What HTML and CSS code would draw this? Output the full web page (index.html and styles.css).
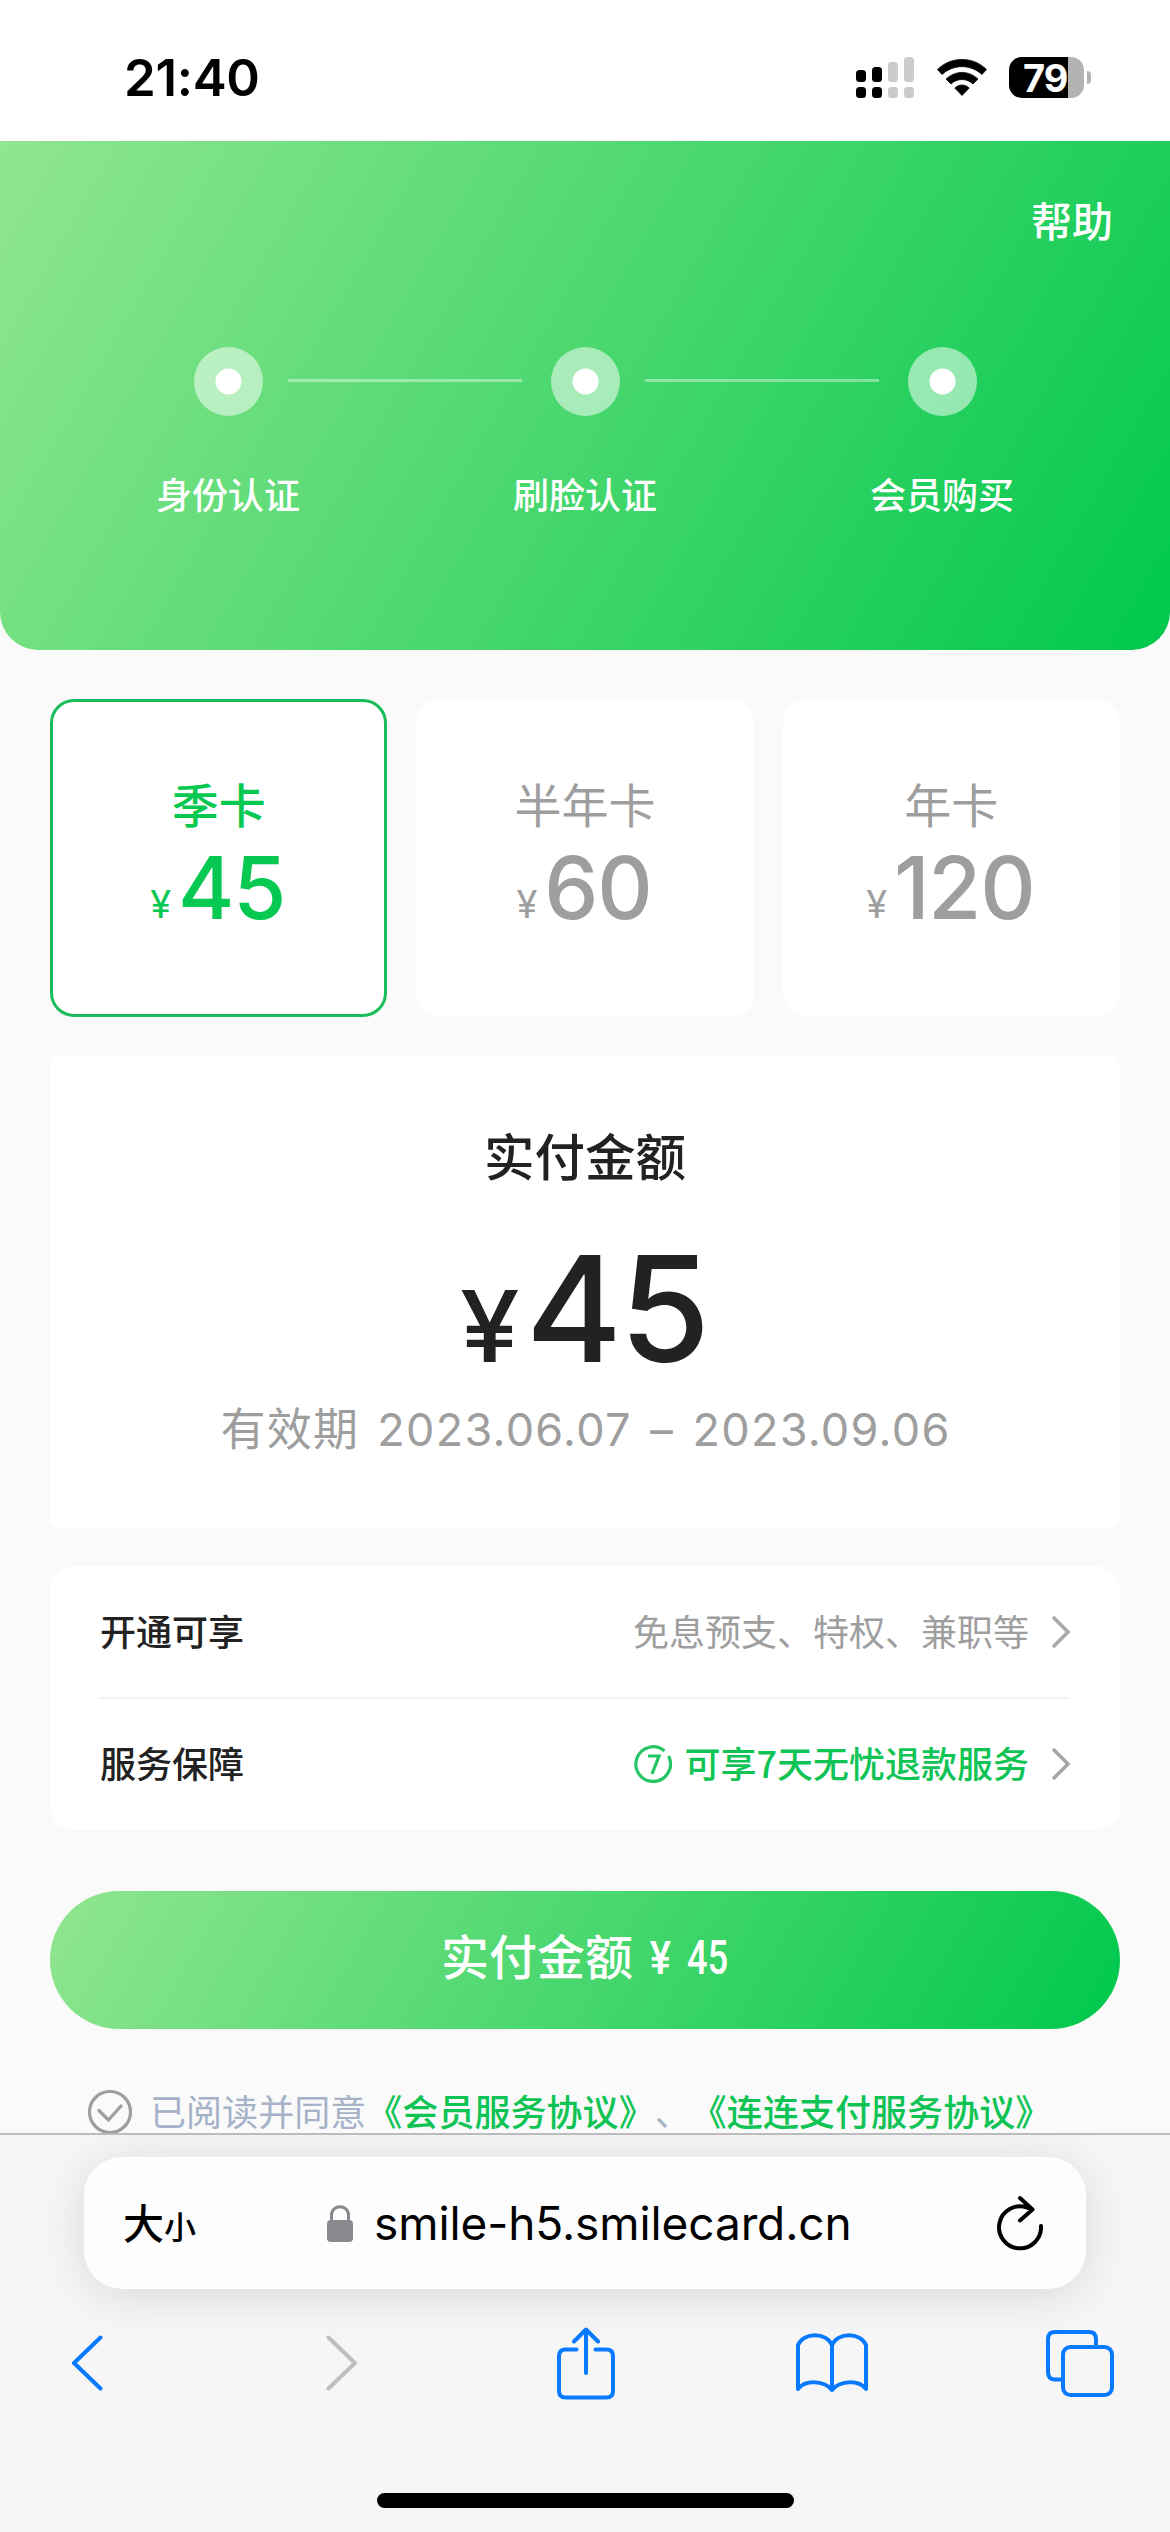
FILE: index.html
```html
<!DOCTYPE html>
<html lang="zh-CN">
<head>
<meta charset="utf-8">
<title>会员购买</title>
<link rel="stylesheet" href="styles.css">
</head>
<body>
<div class="status-bar">
  <span class="time">21:40</span>
  <div class="status-icons">
    <svg class="signal" width="58" height="42" viewBox="0 0 58 42">
      <g fill="#000"><rect y="13" width="10" height="12" rx="3.5"/><rect x="16" y="10" width="10" height="15" rx="3.5"/><rect y="30" width="10" height="11" rx="3.5"/><rect x="16" y="30" width="10" height="11" rx="3.5"/></g>
      <g fill="#cbcbcb"><rect x="32" y="5" width="10" height="20" rx="3.5"/><rect x="48" y="0" width="10" height="25" rx="3.5"/><rect x="32" y="30" width="10" height="11" rx="3.5"/><rect x="48" y="30" width="10" height="11" rx="3.5"/></g>
    </svg>
    <svg class="wifi" width="50" height="38" viewBox="0 0 50 38">
      <path d="M.5 10.500C14-3 36-3 49.500 10.500L45 15.500C33.500 5 16.500 5 5 15.500ZM9 20C18.500 11.200 31.500 11.200 41 20L36 25C29.500 19 20.500 19 14 25ZM17.800 29C22 25 28 25 32.200 29L25 36.500Z" fill="#000" stroke="#000" stroke-width=".8" stroke-linejoin="round"/>
    </svg>
    <div class="battery"><span class="battery-level">79</span></div>
    <div class="battery-cap"></div>
  </div>
</div>

<main class="page">
  <header class="hero">
    <a class="help">帮助</a>
    <div class="steps">
      <div class="step"><i class="dot"></i><span>身份认证</span></div>
      <i class="line"></i>
      <div class="step"><i class="dot"></i><span>刷脸认证</span></div>
      <i class="line"></i>
      <div class="step"><i class="dot"></i><span>会员购买</span></div>
    </div>
  </header>

  <section class="plans">
    <div class="plan active"><div class="plan-name">季卡</div><div class="plan-price"><small>¥</small>45</div></div>
    <div class="plan"><div class="plan-name">半年卡</div><div class="plan-price"><small>¥</small>60</div></div>
    <div class="plan"><div class="plan-name">年卡</div><div class="plan-price"><small>¥</small>120</div></div>
  </section>

  <section class="total">
    <div class="total-title">实付金额</div>
    <div class="total-price"><small>¥</small>45</div>
    <div class="validity">有效期<span>2023.06.07 – 2023.09.06</span></div>
  </section>

  <section class="info">
    <div class="row">
      <span class="label">开通可享</span>
      <span class="value">免息预支、特权、兼职等</span>
      <svg class="arrow" width="19" height="34" viewBox="0 0 19 34"><path d="M2 2L17 17L2 32"/></svg>
    </div>
    <div class="row">
      <span class="label">服务保障</span>
      <svg class="seven" width="38" height="38" viewBox="0 0 38 38"><path d="M34.500 11A17.300 17.300 0 1 1 30.500 6M14 11H25L18 29"/></svg>
      <span class="value green">可享7天无忧退款服务</span>
      <svg class="arrow" width="19" height="34" viewBox="0 0 19 34"><path d="M2 2L17 17L2 32"/></svg>
    </div>
  </section>

  <div class="pay"><span>实付金额</span><span class="pay-yen">¥</span><span class="pay-num">45</span></div>

  <div class="agree">
    <svg class="check" width="44" height="44" viewBox="0 0 44 44"><circle cx="22" cy="22" r="20.500"/><path d="M11 20.500L20.500 30L33 16"/></svg>
    <span>已阅读并同意<b>《会员服务协议》</b>、<b>《连连支付服务协议》</b></span>
  </div>
</main>

<footer class="browser">
  <div class="address">
    <span class="text-size">大<small>小</small></span>
    <svg class="lock" width="26" height="37" viewBox="0 0 26 37"><rect y="15" width="26" height="22" rx="4" fill="#8a8a8e"/><path d="M4.500 17V10C4.500-1 21.500-1 21.500 10V17" fill="none" stroke="#8a8a8e" stroke-width="3"/></svg>
    <span class="url">smile-h5.smilecard.cn</span>
    <svg class="reload" width="46" height="56" viewBox="0 0 46 56"><path d="M44 31A21 21 0 1 1 30 12.500L35 14M23 3L35.500 14.500L23 25.500"/></svg>
  </div>
  <nav class="tools">
    <svg width="32" height="56" viewBox="0 0 32 56"><path d="M29.500 2.500L3 28L29.500 53.500"/></svg>
    <svg class="disabled" width="32" height="56" viewBox="0 0 32 56"><path d="M2.500 2.500L29 28L2.500 53.500"/></svg>
    <svg width="58" height="73" viewBox="0 0 58 73"><path d="M19.500 22.500H8.500Q2 22.500 2 29V64Q2 70.500 8.500 70.500H49.500Q56 70.500 56 64V29Q56 22.500 49.500 22.500H38.500M29 46V3M17 14.500L29 2.500L41 14.500"/></svg>
    <svg width="72" height="60" viewBox="0 0 72 60"><path d="M36 57C29 48 10 46 2 56V12C8-1 30-1 36 12C42-1 64-1 70 12V56C62 46 43 48 36 57V12"/></svg>
    <svg width="68" height="67" viewBox="0 0 68 67"><path d="M17 49.500H9Q2 49.500 2 42V9Q2 2 9 2H43Q50 2 50 9V17"/><rect x="17" y="17" width="49" height="48" rx="7.500"/></svg>
  </nav>
  <div class="home-indicator"></div>
</footer>
</body>
</html>
```
FILE: styles.css
```css
* { box-sizing: border-box; }
body {
  margin: 0;
  width: 1170px;
  height: 2532px;
  display: flex;
  flex-direction: column;
  overflow: hidden;
  background: #fafafa;
  font-family: Inter, "Noto Sans CJK SC", sans-serif;
}
svg { display: block; flex: none; fill: none; }
small { font-size: inherit; }
b { font-weight: 500; color: #0fc455; }

.status-bar {
  flex: none;
  height: 141px;
  padding: 0 79px 0 124px;
  display: flex;
  justify-content: space-between;
  background: #fff;
}
.time { margin-top: 48px; font-size: 51px; line-height: 60px; font-weight: 600; letter-spacing: -.3px; }
.status-icons { display: flex; padding-top: 57px; }
.wifi { margin: 2px 22px 0 23px; }
.battery {
  width: 75px;
  height: 41px;
  border-radius: 13px;
  background: linear-gradient(90deg, #000 59px, #b3b3b3 59px);
}
.battery-level {
  display: block;
  padding-left: 14px;
  color: #fff;
  font-size: 38px;
  line-height: 42px;
  font-weight: 700;
  letter-spacing: -1px;
}
.battery-cap { width: 4px; height: 13px; margin: 14px 0 0 3px; border-radius: 0 6px 6px 0; background: #b3b3b3; }

.page { flex: none; height: 1992px; overflow: hidden; }
.hero {
  height: 509px;
  padding-top: 55px;
  border-radius: 0 0 38px 38px;
  background: linear-gradient(120deg, #91e68f 0%, #00c84d 100%);
  color: #fff;
}
.help { display: block; margin-right: 57px; text-align: right; font-size: 41px; line-height: 52px; font-weight: 500; }
.steps { display: flex; justify-content: center; margin-top: 99px; }
.step { width: 146px; display: flex; flex-direction: column; align-items: center; font-size: 36px; line-height: 52px; font-weight: 500; white-space: nowrap; }
.step span { margin-top: 54px; }
.dot { width: 69px; height: 69px; border-radius: 50%; background: radial-gradient(circle, #fff 12.500px, rgba(255,255,255,.52) 13.500px); }
.line { width: 234px; height: 3px; margin: 32px -10px 0 -13px; background: rgba(255,255,255,.4); }

.plans { display: grid; grid-template-columns: repeat(3, 1fr); gap: 29px; margin: 49px 50px 0; }
.plan { height: 318px; padding-top: 75px; border-radius: 24px; background: #fff; color: #9e9e9e; text-align: center; }
.plan.active { padding-top: 72px; border: 3px solid #1bbd5b; color: #07c951; }
.plan-name { font-size: 47px; line-height: 64px; }
.active .plan-name { font-weight: 500; }
.plan-price { padding-right: 2px; font-size: 86px; line-height: 100px; font-weight: 500; letter-spacing: -1.200px; }
.plan-price small { position: relative; top: -1px; margin-right: 8px; font-size: 38px; font-weight: 400; }

.total { height: 474px; margin: 38px 50px 0; padding-top: 67px; border-radius: 10px; background: #fff; text-align: center; color: #222; }
.total-title { font-size: 50.500px; line-height: 72px; font-weight: 500; }
.total-price { height: 170px; margin-top: 30px; font-size: 147px; line-height: 170px; font-weight: 500; letter-spacing: -2.500px; }
.total-price small { display: inline-block; margin-right: 11px; font-size: 99px; line-height: 1; transform: scaleX(1.08); }
.validity { height: 64px; margin-top: 4px; padding-left: 1px; font-size: 45px; line-height: 64px; letter-spacing: 1.300px; word-spacing: 4.500px; color: #9e9e9e; }
.validity span { margin-left: 18px; }

.info { height: 264px; margin: 37px 50px 0; padding: 0 50px; border-radius: 24px; background: #fff; }
.row { height: 131px; display: flex; align-items: center; font-family: "Noto Sans CJK SC", sans-serif; font-size: 36px; line-height: 52px; }
.row span { padding-bottom: 4px; }
.row + .row { border-top: 2px solid #f2f2f2; }
.label { margin-right: auto; font-weight: 500; color: #222; }
.value { color: #9e9e9e; }
.green { color: #0fc455; font-weight: 500; }
.seven { margin-right: 12px; stroke: #23c663; stroke-width: 3.200; }
.arrow { margin-left: 22px; stroke: #a6a6a6; stroke-width: 3.500; }

.pay {
  height: 138px;
  margin: 61px 50px 0;
  padding-bottom: 5px;
  display: flex;
  align-items: center;
  justify-content: center;
  border-radius: 69px;
  background: linear-gradient(120deg, #91e68f 0%, #00c84d 100%);
  color: #fff;
  font-size: 48px;
  line-height: 70px;
  font-weight: 500;
}
.pay-yen { width: 22px; margin-left: 15px; font: 500 47px/70px Roboto, sans-serif; transform: scaleX(.85); }
.pay-num { width: 42px; margin-left: 17px; font: 500 49px/70px Roboto, sans-serif; transform: scaleX(.74); transform-origin: left; }

.agree { display: flex; align-items: center; height: 44px; margin-top: 61px; padding-left: 88px; font-family: "Noto Sans CJK SC", sans-serif; font-size: 36px; line-height: 42px; color: #a5b2c8; white-space: nowrap; text-spacing-trim: space-all; }
.agree span { padding-bottom: 5px; letter-spacing: .050px; }
.check { margin-right: 18px; stroke: #9e9e9e; stroke-width: 3.200; stroke-linecap: round; stroke-linejoin: round; }

.browser { flex: 1; border-top: 2px solid #bcbcbc; padding-top: 22px; background: #f6f6f6; overflow: hidden; }
.address {
  height: 132px;
  margin: 0 84px 0 84px;
  padding: 0 43px 0 39px;
  display: flex;
  align-items: center;
  border-radius: 38px;
  background: #fdfdfd;
  box-shadow: 0 6px 50px rgba(0,0,0,.12);
  color: #000;
}
.text-size { width: 204px; font: 500 41px/60px "Noto Sans CJK SC", sans-serif; }
.text-size small { font-size: 32px; }
.url { margin-left: 21px; font-size: 46px; line-height: 60px; letter-spacing: -.1px; white-space: nowrap; }
.reload { margin-left: auto; stroke: #000; stroke-width: 4; stroke-linecap: round; stroke-linejoin: round; }
.tools {
  display: grid;
  grid-template-columns: 255px 231px 239px 250px 68px;
  align-items: center;
  height: 76px;
  margin-top: 36px;
  padding-left: 71px;
  stroke: #087aff;
  stroke-width: 4;
  stroke-linecap: round;
  stroke-linejoin: round;
}
.disabled { stroke: #bfbfbf; }
.home-indicator { width: 417px; height: 15px; margin: 92px auto 0; border-radius: 8px; background: #000; }
```
